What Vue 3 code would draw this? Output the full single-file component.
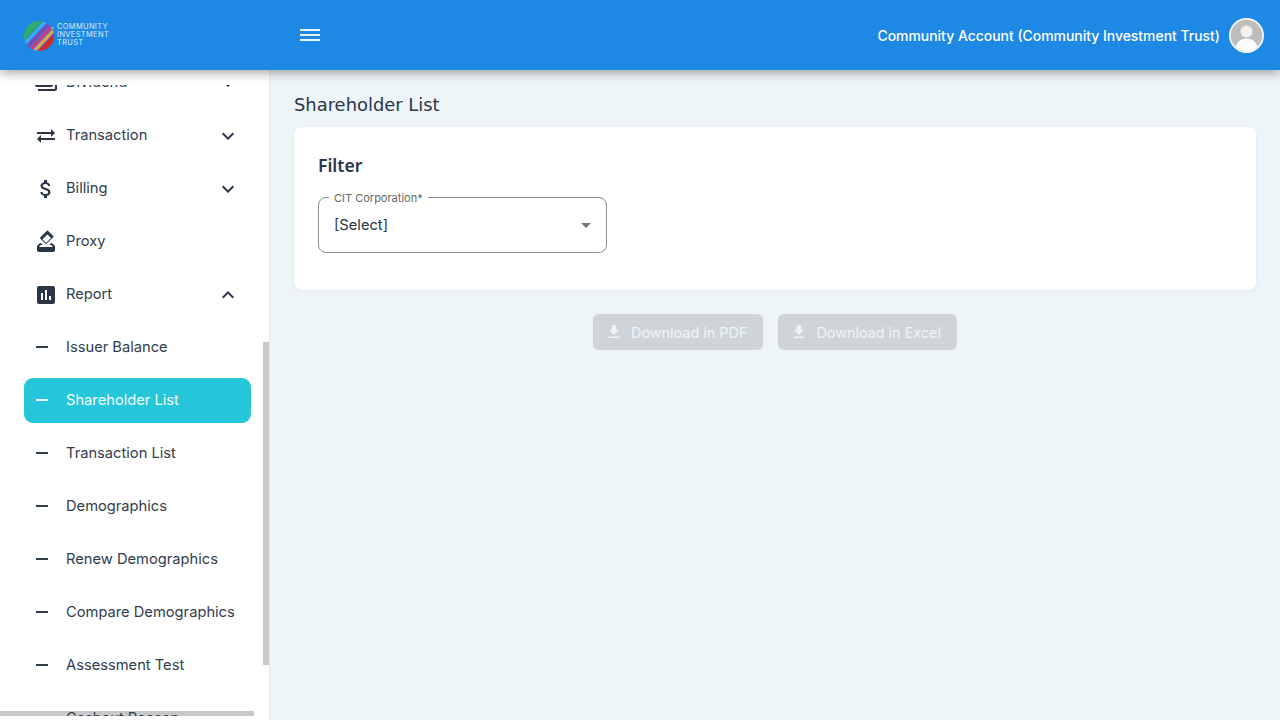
<script setup>
const topItems = [
  { label: 'Transaction', icon: 'swap', chevron: 'down' },
  { label: 'Billing', icon: 'dollar', chevron: 'down' },
  { label: 'Proxy', icon: 'vote' },
  { label: 'Report', icon: 'report', chevron: 'up' },
]
const subItems = ['Issuer Balance', 'Shareholder List', 'Transaction List', 'Demographics', 'Renew Demographics', 'Compare Demographics', 'Assessment Test', 'Cashout Reason']
const bands = [
  { c: '#2fae6b', y: 1, h: 7.4 },
  { c: '#45a8ee', y: 9.2, h: 3.2 },
  { c: '#7d4bb5', y: 13.2, h: 3.2 },
  { c: '#d5377f', y: 17.2, h: 3.2 },
  { c: '#eaa04a', y: 21.2, h: 3.2 },
  { c: '#cf2a2a', y: 25.2, h: 7 },
]
</script>

<template>
  <div class="app">
    <header class="topbar">
      <div class="brand">
        <svg class="mark" width="32" height="32" viewBox="0 0 32 32">
          <defs>
            <clipPath id="logo-disc"><circle cx="16" cy="16" r="15" /></clipPath>
          </defs>
          <g clip-path="url(#logo-disc)">
            <g transform="rotate(-47 16 16)">
              <rect v-for="b in bands" :key="b.c" x="-4" :y="b.y" width="40" :height="b.h" :fill="b.c" />
            </g>
          </g>
          <circle cx="29.5" cy="8" r="1" fill="#a9d6f3" />
        </svg>
        <div class="brand-text">COMMUNITY<br />INVESTMENT<br />TRUST</div>
      </div>
      <button class="burger" aria-label="Menu"><span></span><span></span><span></span></button>
      <div class="account">
        <span class="account-name">Community Account (Community Investment Trust)</span>
        <span class="avatar">
          <svg width="35" height="35" viewBox="0 0 35 35">
            <defs>
              <clipPath id="avatar-disc"><circle cx="17.5" cy="17.5" r="15.7" /></clipPath>
            </defs>
            <circle cx="17.5" cy="17.5" r="17.5" fill="#f4f6f8" />
            <circle cx="17.5" cy="17.5" r="15.7" fill="#bdbdbd" />
            <g clip-path="url(#avatar-disc)">
              <circle cx="17.5" cy="13.5" r="6" fill="#f3f1ec" />
              <path d="M5.5 35 C6 24 11.5 20.5 17.5 20.5 C23.5 20.5 29 24 29.5 35 Z" fill="#fbfbfb" />
            </g>
          </svg>
        </span>
      </div>
    </header>

    <div class="body">
      <aside class="sidebar">
        <div class="scroll">
          <div class="thumb-h"></div>
          <nav class="nav">
            <a class="row">
              <svg class="ico" width="24" height="24" viewBox="0 0 24 24" fill="#2a3547"><path d="M19 14V6c0-1.1-.9-2-2-2H3c-1.1 0-2 .9-2 2v8c0 1.1.9 2 2 2h14c1.1 0 2-.9 2-2zm-2 0H3V6h14v8zm-7-7c-1.66 0-3 1.34-3 3s1.34 3 3 3 3-1.34 3-3-1.34-3-3-3zm13 0v11c0 1.1-.9 2-2 2H4v-2h17V7h2z" /></svg>
              <span>Dividend</span>
              <svg class="chev" width="24" height="24" viewBox="0 0 24 24" fill="#2a3547"><path d="M7.41 8.59 12 13.17l4.59-4.58L18 10l-6 6-6-6z" /></svg>
            </a>
            <a v-for="it in topItems" :key="it.label" class="row">
              <svg class="ico" width="24" height="24" viewBox="0 0 24 24" fill="#2a3547">
                <path v-if="it.icon === 'swap'" d="M6.99 11 3 15l3.99 4v-3H21v-2H6.99zM21 9l-3.99-4v3H3v2h14.01v3z" />
                <path v-else-if="it.icon === 'dollar'" d="M11.8 10.9c-2.27-.59-3-1.2-3-2.15 0-1.09 1.01-1.85 2.7-1.85 1.78 0 2.44.85 2.5 2.1h2.21c-.07-1.72-1.12-3.3-3.21-3.81V3h-3v2.16c-1.94.42-3.5 1.68-3.5 3.61 0 2.31 1.91 3.46 4.7 4.13 2.5.6 3 1.48 3 2.41 0 .69-.49 1.79-2.7 1.79-2.06 0-2.87-.92-2.98-2.1h-2.2c.12 2.19 1.76 3.42 3.68 3.83V21h3v-2.15c1.95-.37 3.5-1.5 3.5-3.55 0-2.84-2.43-3.81-4.7-4.4z" />
                <path v-else-if="it.icon === 'vote'" d="M18 13h-.68l-2 2h1.91L19 17H5l1.78-2h2.05l-2-2H6l-3 3v4c0 1.1.89 2 1.99 2H19c1.1 0 2-.89 2-2v-4l-3-3zm-1-5.05-4.95 4.95-3.54-3.54 4.95-4.95L17 7.95zm-4.24-7.07L6.39 7.25c-.39.39-.39 1.02 0 1.41l4.95 4.95c.39.39 1.02.39 1.41 0l6.36-6.36c.39-.39.39-1.02 0-1.41L14.16.88c-.38-.39-1.01-.39-1.4 0z" />
                <path v-else d="M19 3H5c-1.1 0-2 .9-2 2v14c0 1.1.9 2 2 2h14c1.1 0 2-.9 2-2V5c0-1.1-.9-2-2-2zM9 17H7v-7h2v7zm4 0h-2V7h2v10zm4 0h-2v-4h2v4z" />
              </svg>
              <span>{{ it.label }}</span>
              <svg v-if="it.chevron" class="chev" width="24" height="24" viewBox="0 0 24 24" fill="#2a3547">
                <path v-if="it.chevron === 'down'" d="M7.41 8.59 12 13.17l4.59-4.58L18 10l-6 6-6-6z" />
                <path v-else d="M7.41 15.41 12 10.83l4.59 4.58L18 14l-6-6-6 6z" />
              </svg>
            </a>
            <a v-for="s in subItems" :key="s" class="row" :class="{ active: s === 'Shareholder List' }">
              <i class="dash"></i>
              <span>{{ s }}</span>
            </a>
          </nav>
          <div class="topmask"></div>
          <div class="bottommask"></div>
          <div class="thumb-v"></div>
        </div>
      </aside>

      <main class="main">
        <h1 class="title">Shareholder List</h1>
        <section class="card">
          <h2 class="card-title">Filter</h2>
          <div class="select">
            <span class="legend">CIT Corporation*</span>
            <span class="value">[Select]</span>
            <i class="caret"></i>
          </div>
        </section>
        <div class="actions">
          <button class="dl" disabled>
            <svg width="18" height="18" viewBox="0 0 24 24" fill="currentColor"><path d="M19 9h-4V3H9v6H5l7 7 7-7zM5 18v2h14v-2H5z" /></svg>
            Download in PDF
          </button>
          <button class="dl" disabled>
            <svg width="18" height="18" viewBox="0 0 24 24" fill="currentColor"><path d="M19 9h-4V3H9v6H5l7 7 7-7zM5 18v2h14v-2H5z" /></svg>
            Download in Excel
          </button>
        </div>
      </main>
    </div>
  </div>
</template>

<style>
html, body { margin: 0; height: 100%; overflow: hidden; }
</style>

<style scoped>
.app {
  width: 1280px;
  height: 720px;
  display: flex;
  flex-direction: column;
  font-family: "Inter", "Liberation Sans", sans-serif;
  color: #2a3547;
  background: #eef5f9;
  overflow: hidden;
}
.topbar {
  height: 70px;
  flex: none;
  background: #1e88e5;
  display: flex;
  align-items: center;
  box-shadow: 0 3px 10px rgba(0, 0, 0, 0.35);
  position: relative;
  z-index: 3;
}
.brand {
  width: 270px;
  box-sizing: border-box;
  padding-left: 23px;
  display: flex;
  align-items: center;
  gap: 2px;
  flex: none;
}
.mark { display: block; margin-top: 2px; }
.brand-text {
  font-size: 7.4px;
  line-height: 8px;
  letter-spacing: 0.4px;
  color: #d9ecfb;
}
.burger {
  margin: 0 0 1px 30px;
  width: 20px;
  padding: 0;
  border: 0;
  background: none;
  display: flex;
  flex-direction: column;
  gap: 3px;
}
.burger span { height: 2px; background: #e8f3fc; display: block; }
.account {
  margin-left: auto;
  padding-right: 16px;
  display: flex;
  align-items: center;
  gap: 9px;
}
.account-name { color: #fff; font-size: 13.95px; font-weight: 500; white-space: nowrap; }
.avatar { width: 35px; height: 35px; display: block; }
.avatar svg { display: block; }

.body { flex: 1; display: flex; min-height: 0; }
.sidebar {
  width: 270px;
  flex: none;
  box-sizing: border-box;
  background: #fff;
  border-right: 1px solid #e4e9ee;
}
.scroll { position: relative; height: 100%; overflow: hidden; }
.nav {
  position: relative;
  margin-top: -10px;
  padding: 0 18px 0 24px;
  display: flex;
  flex-direction: column;
  gap: 8px;
}
.row {
  height: 45px;
  flex: none;
  display: flex;
  align-items: center;
  padding: 0 10px;
  border-radius: 9px;
  font-size: 14.7px;
  color: #323d4e;
}
.row span { padding-bottom: 2px; white-space: nowrap; }
.ico { flex: none; margin-right: 8px; }
.chev { margin-left: auto; margin-right: 1px; flex: none; }
.dash { width: 12px; height: 1.5px; background: #323d4e; margin: -1px 18px 0 2px; flex: none; }
.row.active { background: #26c6da; color: #f2fcfd; }
.row.active .dash { background: #f2fcfd; }
.topmask { position: absolute; left: 0; right: 0; top: 0; height: 15px; background: #fff; }
.bottommask { position: absolute; left: 0; right: 0; bottom: 0; height: 4px; background: #fff; }
.thumb-v {
  position: absolute;
  right: 0;
  top: 272px;
  width: 6px;
  height: 323px;
  background: #c8c8c8;
}
.thumb-h {
  position: absolute;
  left: 0;
  bottom: 4px;
  width: 254px;
  height: 5px;
  background: #c8c8c8;
}

.main { flex: 1; min-width: 0; padding: 24px; box-sizing: border-box; }
.title {
  margin: 0;
  font-family: "DejaVu Sans", sans-serif;
  font-size: 17.9px;
  font-weight: 400;
  line-height: 22px;
  color: #2a3547;
}
.card {
  margin-top: 11px;
  background: #fff;
  border-radius: 8px;
  padding: 24px;
  height: 163px;
  box-sizing: border-box;
  box-shadow: 0 1px 4px rgba(0, 0, 0, 0.05);
}
.card-title {
  margin: 0;
  font-family: "Noto Sans", sans-serif;
  font-size: 17.5px;
  font-weight: 600;
  line-height: 28px;
}
.select {
  position: relative;
  margin-top: 18px;
  width: 289px;
  height: 56px;
  box-sizing: border-box;
  border: 1px solid #8a8f96;
  border-radius: 8px;
  display: flex;
  align-items: center;
  padding: 0 15px;
}
.legend {
  position: absolute;
  left: 10px;
  top: -7px;
  padding: 0 5px;
  background: #fff;
  font-size: 11px;
  line-height: 14px;
  color: #666;
}
.value { font-size: 14.7px; color: #2a3547; padding-bottom: 1px; }
.caret {
  position: absolute;
  right: 15px;
  top: 25px;
  border-left: 5px solid transparent;
  border-right: 5px solid transparent;
  border-top: 5px solid #757575;
}
.actions {
  margin-top: 24px;
  display: flex;
  justify-content: center;
  gap: 15px;
}
.dl {
  height: 36px;
  padding: 0 16px 0 12px;
  display: flex;
  align-items: center;
  gap: 8px;
  border: 0;
  border-radius: 6px;
  background: #cfd4d8;
  color: #eef5f9;
  font-family: "Inter", sans-serif;
  font-size: 14.4px;
}
</style>
